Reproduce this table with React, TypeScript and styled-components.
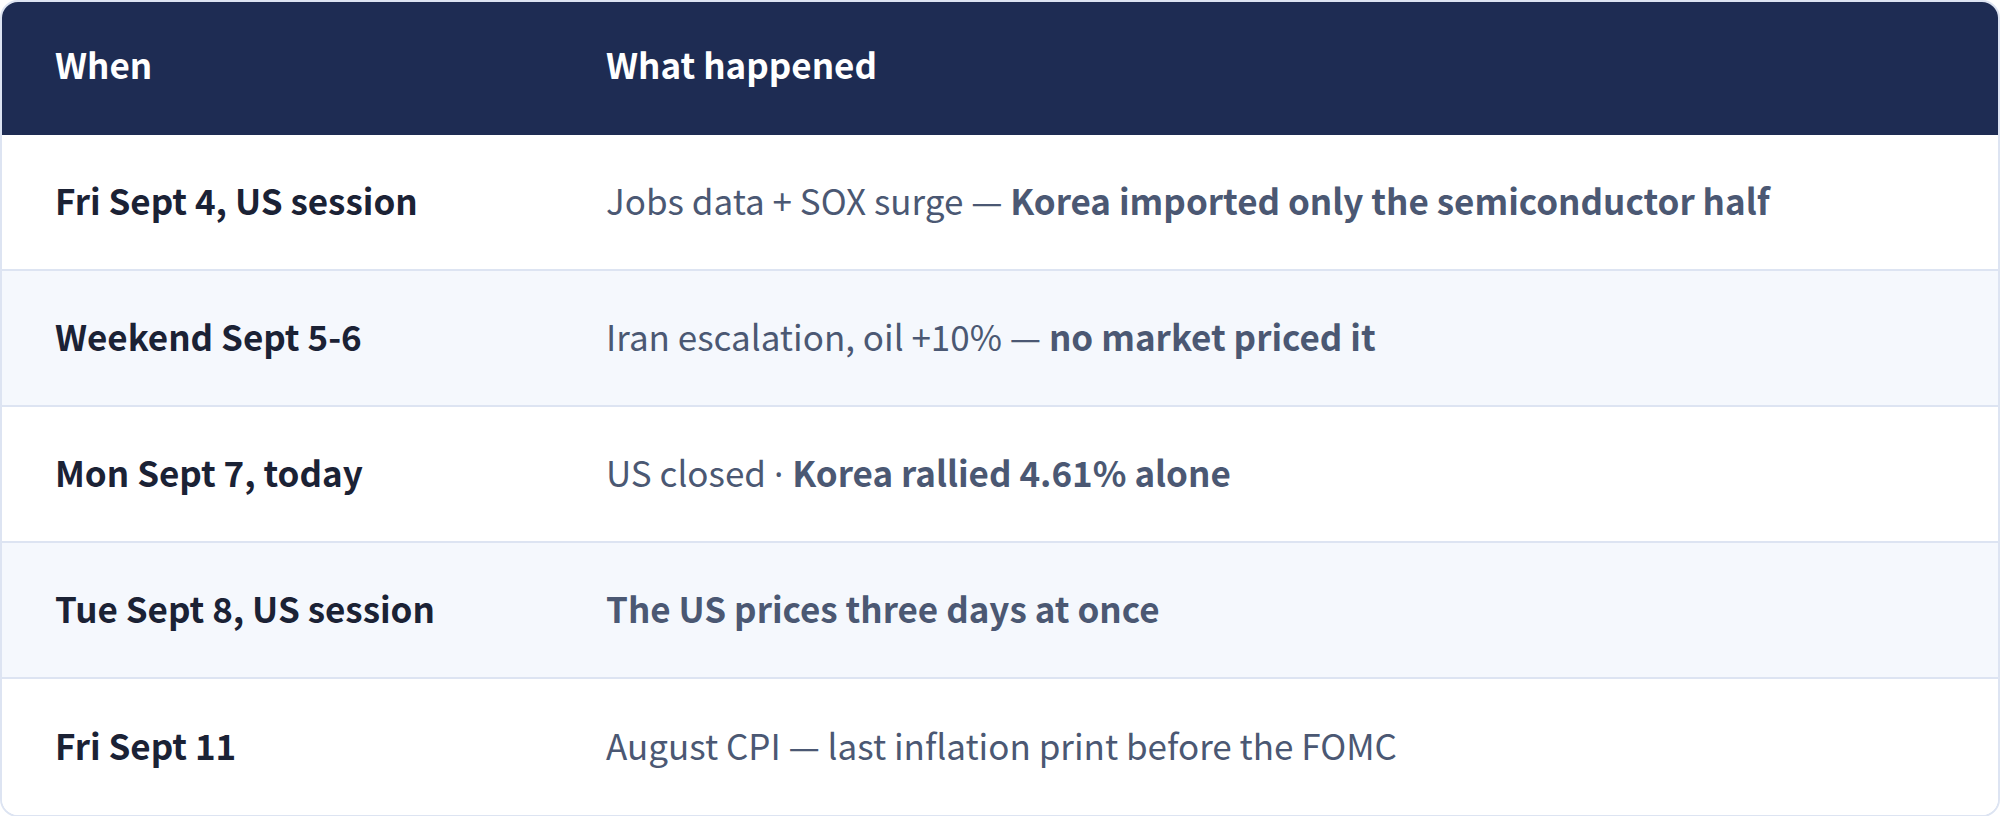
import styled, { createGlobalStyle } from 'styled-components'

const GlobalStyle = createGlobalStyle`
  html, body {
    margin: 0;
    padding: 0;
    background: #fff;
  }
  body {
    font-family: "Noto Sans CJK KR", "Noto Sans", sans-serif;
  }
`

const StyledTable = styled.div`
  width: 2000px;
  box-sizing: border-box;
  border: 2px solid #dde4f2;
  border-radius: 18px;
  overflow: hidden;
  background: #fff;
`

const StyledHead = styled.div`
  display: grid;
  grid-template-columns: 551px 1fr;
  box-sizing: border-box;
  height: 133px;
  padding-bottom: 10px;
  align-items: center;
  background: #1e2c53;
  color: #fff;
  font-size: 35px;
  font-weight: 700;

  & > span {
    padding-left: 53px;
  }
`

const StyledRow = styled.div<{ $alt?: boolean }>`
  display: grid;
  grid-template-columns: 551px 1fr;
  box-sizing: border-box;
  height: 136px;
  padding-bottom: 5px;
  align-items: center;
  background: ${p => (p.$alt ? '#f5f8fd' : '#fff')};
  border-bottom: 2px solid #dde4f2;
  font-size: 35px;

  &:last-child {
    border-bottom: none;
  }
`

const StyledWhen = styled.span`
  padding-left: 53px;
  font-weight: 700;
  color: #1b2235;
`

const StyledWhat = styled.span`
  padding-left: 53px;
  color: #4b5873;

  & strong {
    font-weight: 700;
  }
`

// the CJK font draws the middle dot full width, so take it from Noto Sans
const StyledDot = styled.span`
  font-family: "Noto Sans", sans-serif;
`

type Entry = { when: string; plain?: string; dot?: boolean; bold?: string }

const entries: Entry[] = [
  { when: 'Fri Sept 4, US session', plain: 'Jobs data + SOX surge — ', bold: 'Korea imported only the semiconductor half' },
  { when: 'Weekend Sept 5-6', plain: 'Iran escalation, oil +10% — ', bold: 'no market priced it' },
  { when: 'Mon Sept 7, today', plain: 'US closed ', dot: true, bold: 'Korea rallied 4.61% alone' },
  { when: 'Tue Sept 8, US session', bold: 'The US prices three days at once' },
  { when: 'Fri Sept 11', plain: 'August CPI — last inflation print before the FOMC' },
]

export default function App() {
  return (
    <>
      <GlobalStyle />
      <StyledTable>
        <StyledHead>
          <span>When</span>
          <span>What happened</span>
        </StyledHead>
        {entries.map((e, i) => (
          <StyledRow key={e.when} $alt={i % 2 === 1}>
            <StyledWhen>{e.when}</StyledWhen>
            <StyledWhat>
              {e.plain}
              {e.dot && <StyledDot>· </StyledDot>}
              {e.bold && <strong>{e.bold}</strong>}
            </StyledWhat>
          </StyledRow>
        ))}
      </StyledTable>
    </>
  )
}
